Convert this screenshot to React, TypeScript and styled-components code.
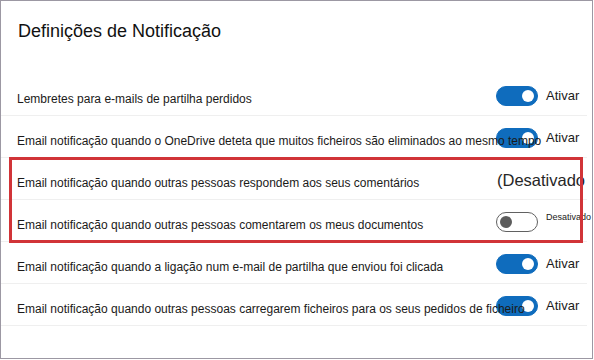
import React from "react";
import styled, { createGlobalStyle } from "styled-components";

const Global = createGlobalStyle`
  html, body { margin: 0; padding: 0; background: #ffffff; }
  body { font-family: "Liberation Sans", Arial, sans-serif; color: #1b1a19; }
`;

const Panel = styled.div`
  box-sizing: border-box;
  width: 593px;
  height: 359px;
  border: 1px solid #9c98a3;
  background: #fff;
  overflow: hidden;
`;

const Title = styled.h1`
  margin: 0;
  padding: 20px 0 0 17px;
  font-size: 18px;
  line-height: 20px;
  font-weight: 400;
  color: #111;
`;

const List = styled.div`
  margin-top: 33px;
  padding-right: 5px;
`;

const Group = styled.div`
  position: relative;
  &::after {
    content: "";
    position: absolute;
    top: -1px;
    bottom: -1px;
    left: 8px;
    right: 4px;
    border: 3px solid #d13438;
    pointer-events: none;
    z-index: 3;
  }
`;

const Row = styled.div`
  box-sizing: border-box;
  height: 42px;
  padding: 8px 0 0 16px;
  border-bottom: 1px solid #efefef;
  display: grid;
  grid-template-columns: minmax(0, 1fr) 91px;
  align-items: center;
`;

const Label = styled.span`
  position: relative;
  z-index: 2;
  font-size: 12px;
  white-space: nowrap;
  color: #1b1a19;
`;

const Control = styled.div`
  display: flex;
  align-items: center;
  gap: 8px;
  height: 100%;
`;

const Track = styled.span<{ $on: boolean }>`
  box-sizing: border-box;
  position: relative;
  flex: none;
  width: 42px;
  height: 20px;
  margin-bottom: 6px;
  border-radius: 10px;
  background: ${(p) => (p.$on ? "#0f6cbd" : "#ffffff")};
  border: 1px solid ${(p) => (p.$on ? "#0f6cbd" : "#616161")};
  &::after {
    content: "";
    position: absolute;
    top: 3px;
    ${(p) => (p.$on ? "right: 3px;" : "left: 3px;")}
    width: 12px;
    height: 12px;
    border-radius: 50%;
    background: ${(p) => (p.$on ? "#ffffff" : "#5c5c5c")};
  }
`;

const StateText = styled.span`
  font-size: 13px;
  margin-bottom: 6px;
  color: #1b1a19;
`;

const BigState = styled.span`
  font-size: 16.5px;
  margin-left: 1px;
  margin-bottom: 4px;
  color: #262626;
  white-space: nowrap;
`;

const SmallState = styled.span`
  align-self: flex-start;
  margin-top: 4px;
  font-size: 9px;
  white-space: nowrap;
  color: #1b1a19;
`;

const Toggle = ({ on }: { on: boolean }) => <Track $on={on} role="switch" aria-checked={on} />;

const OnRow = ({ text }: { text: string }) => (
  <Row>
    <Label>{text}</Label>
    <Control>
      <Toggle on />
      <StateText>Ativar</StateText>
    </Control>
  </Row>
);

export default function App() {
  return (
    <>
      <Global />
      <Panel>
        <Title>Definições de Notificação</Title>
        <List>
          <OnRow text="Lembretes para e-mails de partilha perdidos" />
          <OnRow text="Email notificação quando o OneDrive deteta que muitos ficheiros são eliminados ao mesmo tempo" />
          <Group>
            <Row>
              <Label>Email notificação quando outras pessoas respondem aos seus comentários</Label>
              <Control>
                <BigState>(Desativado</BigState>
              </Control>
            </Row>
            <Row>
              <Label>Email notificação quando outras pessoas comentarem os meus documentos</Label>
              <Control>
                <Toggle on={false} />
                <SmallState>Desativado</SmallState>
              </Control>
            </Row>
          </Group>
          <OnRow text="Email notificação quando a ligação num e-mail de partilha que enviou foi clicada" />
          <OnRow text="Email notificação quando outras pessoas carregarem ficheiros para os seus pedidos de ficheiro" />
        </List>
      </Panel>
    </>
  );
}
